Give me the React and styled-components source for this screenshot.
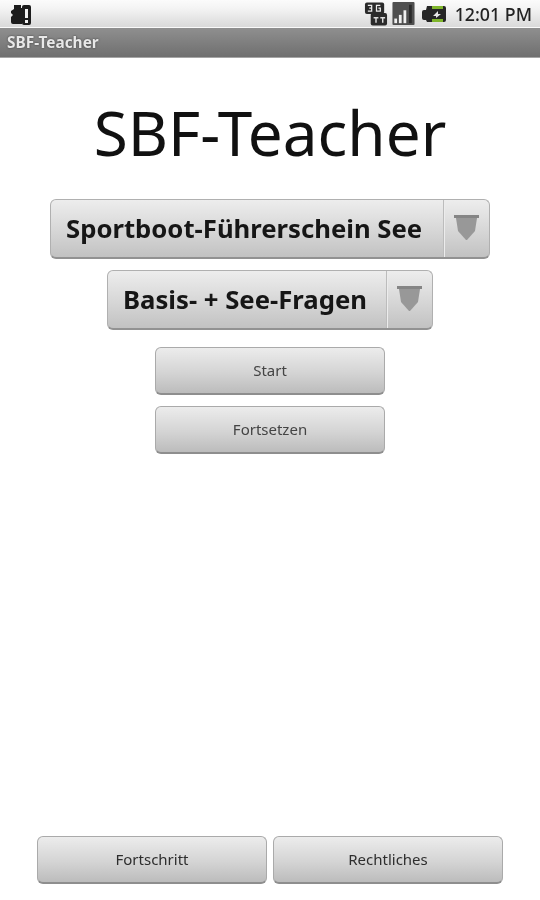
import styled, { createGlobalStyle } from 'styled-components'

const GlobalStyle = createGlobalStyle`
  html, body {
    margin: 0;
    padding: 0;
    background: #fff;
  }
`

const Screen = styled.div`
  width: 540px;
  height: 900px;
  display: flex;
  flex-direction: column;
  background: #fff;
  font-family: "Noto Sans", "Open Sans", sans-serif;
  overflow: hidden;
  filter: blur(0.6px);
`

const StatusBar = styled.div`
  height: 28px;
  padding: 0 8px 0 10px;
  box-sizing: border-box;
  display: flex;
  align-items: center;
  background: linear-gradient(#fbfbfb, #f4f4f4 30%, #d9d9d9);
  border-bottom: 1px solid #fafafa;
`

const StatusIcons = styled.div`
  margin-left: auto;
  display: flex;
  align-items: center;
  gap: 4px;
`

const BatterySlot = styled.span`
  display: flex;
  margin-left: 3px;
`

const Clock = styled.span`
  margin-left: 5px;
  font-size: 17.8px;
  font-weight: 500;
  color: #222;
`

const TitleBar = styled.div`
  height: 30px;
  padding-left: 7px;
  box-sizing: border-box;
  display: flex;
  align-items: center;
  background: linear-gradient(#8f8f8f, #6f6f6f);
  border-bottom: 1px solid #a5a5a5;
  color: #e8e8e8;
  font-size: 15.400px;
  font-weight: 700;
  text-shadow: 0 0 2px #333;
`

const Content = styled.main`
  flex: 1;
  display: flex;
  flex-direction: column;
  align-items: center;
  padding-top: 37px;
`

const Heading = styled.h1`
  margin: 0 0 29px;
  height: 75px;
  line-height: 75px;
  font-size: 62px;
  font-weight: 400;
  color: #111;
`

const SpinnerBox = styled.div`
  width: ${(p) => p.$width}px;
  height: 60px;
  margin-bottom: 11px;
  box-sizing: border-box;
  display: flex;
  align-items: stretch;
  border: 1px solid #b0b0b0;
  border-bottom: 2px solid #929292;
  border-radius: 6px;
  background: linear-gradient(#ededed, #d6d6d6 55%, #c2c2c2);
`

const SpinnerLabel = styled.span`
  flex: 1;
  padding-left: 15px;
  display: flex;
  align-items: center;
  font-size: 25.700px;
  font-weight: 700;
  white-space: nowrap;
  color: #161616;
`

const SpinnerArrow = styled.span`
  width: 45px;
  display: flex;
  align-items: center;
  justify-content: center;
  border-left: 1px solid #bcbcbc;
  box-shadow: inset 1px 0 0 #ececec;
`

const Button = styled.button`
  width: ${(p) => p.$width}px;
  height: 48px;
  padding: 0 0 2px;
  box-sizing: border-box;
  border: 1px solid #aaaaaa;
  border-bottom: 2px solid #8e8e8e;
  border-radius: 6px;
  background: linear-gradient(#ececec, #d4d4d4 55%, #bcbcbc);
  font-family: inherit;
  font-size: 15px;
  color: #444;
`

const MainButton = styled(Button)`
  margin-top: ${(p) => p.$top}px;
`

const BottomBar = styled.div`
  margin-top: auto;
  margin-bottom: 16px;
  display: flex;
  gap: 6px;
`

const BottomButton = styled(Button)`
  color: #2e2e2e;
`

const SdCardIcon = () => (
  <svg width="22" height="24" viewBox="0 0 22 24">
    <path d="M4 3h7v3h1v16H3a2 2 0 0 1-2-2v-5l2-2-2-2V9l3-2z" fill="#1c1c1c" />
    <rect x="12" y="3" width="9" height="20" rx="2" fill="#1c1c1c" />
    <rect x="15" y="7" width="3" height="9" fill="#f2f2f2" />
    <rect x="15" y="18" width="3" height="3" fill="#f2f2f2" />
  </svg>
)

const DataIcon = () => (
  <svg width="24" height="26" viewBox="0 0 25 26">
    <rect x="1" y="1" width="20" height="12" rx="2" fill="#2b2b2b" />
    <rect x="7" y="12" width="17" height="13" rx="2" fill="#2b2b2b" />
    <path d="M4 4h4v6H4M5.500 7H8M17 4h-4v6h4V7h-2" fill="none" stroke="#eee" strokeWidth="1.3" />
    <path d="M10 17h5M12.500 16v6M17 17h5M19.500 16v6" stroke="#ddd" strokeWidth="1.5" />
  </svg>
)

const SignalIcon = () => (
  <svg width="23" height="23" viewBox="0 0 24 25">
    <rect width="24" height="25" rx="1" fill="#4f4f4f" />
    <rect x="2" y="18" width="3" height="5" fill="#f0f0f0" />
    <rect x="7" y="14" width="3" height="9" fill="#f0f0f0" />
    <rect x="12" y="9" width="3" height="14" fill="#f0f0f0" />
    <rect x="18" y="3" width="3" height="20" fill="#2a2a2a" />
  </svg>
)

const BatteryIcon = () => (
  <svg width="24" height="18" viewBox="0 0 24 18">
    <path d="M5 1h17a2 2 0 0 1 2 2v12a2 2 0 0 1-2 2H5l-1-2H2a2 2 0 0 1-2-2V7a2 2 0 0 1 2-2h2z" fill="#262626" />
    <rect x="10" y="1" width="11" height="3" fill="#7fb52b" />
    <rect x="10" y="14" width="11" height="3" fill="#7fb52b" />
    <path d="M11 11l5-5v3h3l-5 4v-2z" fill="#e8e8e8" />
  </svg>
)

const ArrowIcon = () => (
  <svg width="25" height="28" viewBox="0 0 25 28">
    <rect x="0" y="0" width="25" height="3" fill="#858585" />
    <path d="M2 3h21l-2 13-8 9h-1l-8-9z" fill="#989898" />
  </svg>
)

const Spinner = ({ width, label }) => (
  <SpinnerBox $width={width}>
    <SpinnerLabel>{label}</SpinnerLabel>
    <SpinnerArrow>
      <ArrowIcon />
    </SpinnerArrow>
  </SpinnerBox>
)

export default function App() {
  return (
    <Screen>
      <GlobalStyle />
      <StatusBar>
        <SdCardIcon />
        <StatusIcons>
          <DataIcon />
          <SignalIcon />
          <BatterySlot>
            <BatteryIcon />
          </BatterySlot>
          <Clock>12:01 PM</Clock>
        </StatusIcons>
      </StatusBar>
      <TitleBar>SBF-Teacher</TitleBar>
      <Content>
        <Heading>SBF-Teacher</Heading>
        <Spinner width={440} label="Sportboot-Führerschein See" />
        <Spinner width={326} label="Basis- + See-Fragen" />
        <MainButton $width={230} $top={6}>Start</MainButton>
        <MainButton $width={230} $top={11}>Fortsetzen</MainButton>
        <BottomBar>
          <BottomButton $width={230}>Fortschritt</BottomButton>
          <BottomButton $width={230}>Rechtliches</BottomButton>
        </BottomBar>
      </Content>
    </Screen>
  )
}
